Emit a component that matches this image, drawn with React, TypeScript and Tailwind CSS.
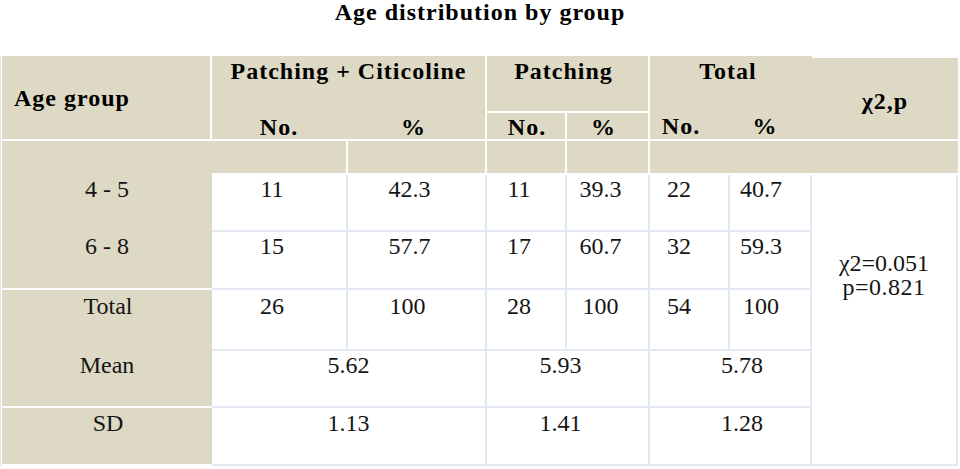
import React from "react";

const BEIGE = "bg-[#ddd9c4]";

export default function App() {
  const serif = { fontFamily: '"Liberation Serif", "Times New Roman", serif' };
  const hdr = `${BEIGE} font-bold text-[24px] leading-[28px] tracking-[1px] text-black`;
  const dat = "bg-white text-[24px] leading-[28px] text-[#151515] border-[#e3e9f0] flex justify-center";
  const age = `${BEIGE} text-[24px] leading-[28px] text-[#151515] flex justify-center`;
  return (
    <div className="w-[960px] h-[469px] bg-white overflow-hidden" style={serif}>
      <div className="h-[24px] text-center font-bold text-[24px] leading-[24px] tracking-[1px] text-black">
        Age distribution by group
      </div>
      <div className="mt-[32px] pl-[1px] border-l border-[#e6e6e6] w-[958px]">
        <div className="grid grid-cols-[210px_136px_139px_80px_83px_80px_82px_146px] grid-rows-[57px_28px_34px_57px_58px_61px_57px_58px]">
          {/* Header row 1-2 */}
          <div className={`${hdr} col-start-1 row-start-1 row-span-2 border-r-2 border-b-2 border-white flex items-center pl-[12px]`}>
            Age group
          </div>
          <div className={`${hdr} col-start-2 col-span-2 row-start-1 border-r-2 border-white text-center pt-[1px]`}>
            Patching + Citicoline
          </div>
          <div className={`${hdr} col-start-2 row-start-2 border-b-2 border-white text-center pr-[2px]`}>No.</div>
          <div className={`${hdr} col-start-3 row-start-2 border-b-2 border-r-2 border-white text-center pr-[6px]`}>%</div>
          <div className={`${hdr} col-start-4 col-span-2 row-start-1 border-b-2 border-r-2 border-white text-center pt-[1px] pr-[8px]`}>
            Patching
          </div>
          <div className={`${hdr} col-start-4 row-start-2 border-b-2 border-r-2 border-white text-center pl-[2px]`}>No.</div>
          <div className={`${hdr} col-start-5 row-start-2 border-b-2 border-r-2 border-white text-center pr-[8px]`}>%</div>
          <div className={`${hdr} col-start-6 col-span-2 row-start-1 text-center pt-[1px] pr-[6px]`}>
            Total
          </div>
          <div className={`${hdr} col-start-6 row-start-2 border-b-2 border-white flex flex-col`}>
            <div className="h-[2px] bg-white mr-[3px]" />
            <div className="text-center pr-[18px] leading-[26px]">No.</div>
          </div>
          <div className={`${hdr} col-start-7 row-start-2 border-b-2 border-white flex flex-col`}>
            <div className="h-[2px] bg-white ml-[2px]" />
            <div className="text-center pr-[12px] leading-[26px]">%</div>
          </div>
          <div className={`${hdr} col-start-8 row-start-1 row-span-2 border-t-2 border-b-2 border-white flex items-center justify-center pt-[4px]`}>
            χ2,p
          </div>

          {/* Row 3 blank */}
          <div className={`${BEIGE} col-start-1 row-start-3`} />
          <div className={`${BEIGE} col-start-2 row-start-3 border-r-2 border-b-2 border-white`} />
          <div className={`${BEIGE} col-start-3 row-start-3 border-r-2 border-b-2 border-white`} />
          <div className={`${BEIGE} col-start-4 row-start-3 border-r-2 border-b-2 border-white`} />
          <div className={`${BEIGE} col-start-5 row-start-3 border-r-2 border-b-2 border-white`} />
          <div className={`${BEIGE} col-start-6 col-span-3 row-start-3 border-b-2 border-white`} />

          {/* Row 4 */}
          <div className={`${age} col-start-1 row-start-4`}>4 - 5</div>
          <div className={`${dat} col-start-2 row-start-4 border-r-2 border-b-2 pr-[14px]`}>11</div>
          <div className={`${dat} col-start-3 row-start-4 border-r-2 border-b-2 pr-[14px]`}>42.3</div>
          <div className={`${dat} col-start-4 row-start-4 border-r-2 border-b-2 pr-[14px]`}>11</div>
          <div className={`${dat} col-start-5 row-start-4 border-r-2 border-b-2 pr-[14px]`}>39.3</div>
          <div className={`${dat} col-start-6 row-start-4 border-r-2 border-b-2 pr-[20px]`}>22</div>
          <div className={`${dat} col-start-7 row-start-4 border-r-2 border-b-2 pr-[18px]`}>40.7</div>
          <div className="bg-white text-[24px] text-[#151515] border-[#e3e9f0] col-start-8 row-start-4 row-span-5 border-r-2 border-b-2 flex flex-col items-center justify-start pt-[76px] leading-[24px]">
            <div>χ2=0.051</div>
            <div className="tracking-[0.5px]">p=0.821</div>
          </div>

          {/* Row 5 */}
          <div className={`${age} col-start-1 row-start-5 border-b-2 border-white`}>6 - 8</div>
          <div className={`${dat} col-start-2 row-start-5 border-r-2 border-b-2 pr-[14px]`}>15</div>
          <div className={`${dat} col-start-3 row-start-5 border-r-2 border-b-2 pr-[14px]`}>57.7</div>
          <div className={`${dat} col-start-4 row-start-5 border-r-2 border-b-2 pr-[14px]`}>17</div>
          <div className={`${dat} col-start-5 row-start-5 border-r-2 border-b-2 pr-[14px]`}>60.7</div>
          <div className={`${dat} col-start-6 row-start-5 border-r-2 border-b-2 pr-[20px]`}>32</div>
          <div className={`${dat} col-start-7 row-start-5 border-r-2 border-b-2 pr-[18px]`}>59.3</div>

          {/* Row 6 Total */}
          <div className={`${age} col-start-1 row-start-6 pt-[2px] pl-[2px]`}>Total</div>
          <div className={`${dat} col-start-2 row-start-6 border-r-2 border-b-2 pr-[14px] pt-[2px]`}>26</div>
          <div className={`${dat} col-start-3 row-start-6 border-r-2 border-b-2 pr-[18px] pt-[2px]`}>100</div>
          <div className={`${dat} col-start-4 row-start-6 border-r-2 border-b-2 pr-[14px] pt-[2px]`}>28</div>
          <div className={`${dat} col-start-5 row-start-6 border-r-2 border-b-2 pr-[14px] pt-[2px]`}>100</div>
          <div className={`${dat} col-start-6 row-start-6 border-r-2 border-b-2 pr-[20px] pt-[2px]`}>54</div>
          <div className={`${dat} col-start-7 row-start-6 border-r-2 border-b-2 pr-[18px] pt-[2px]`}>100</div>

          {/* Row 7 Mean */}
          <div className={`${age} col-start-1 row-start-7 border-b-2 border-white`}>Mean</div>
          <div className={`${dat} col-start-2 col-span-2 row-start-7 border-r-2 border-b-2`}>5.62</div>
          <div className={`${dat} col-start-4 col-span-2 row-start-7 border-r-2 border-b-2 pr-[14px]`}>5.93</div>
          <div className={`${dat} col-start-6 col-span-2 row-start-7 border-r-2 border-b-2 pl-[24px]`}>5.78</div>

          {/* Row 8 SD */}
          <div className={`${age} col-start-1 row-start-8 border-b-2 border-white pt-[1px] pl-[2px]`}>SD</div>
          <div className={`${dat} col-start-2 col-span-2 row-start-8 border-r-2 border-b-2 pt-[1px]`}>1.13</div>
          <div className={`${dat} col-start-4 col-span-2 row-start-8 border-r-2 border-b-2 pr-[14px] pt-[1px]`}>1.41</div>
          <div className={`${dat} col-start-6 col-span-2 row-start-8 border-r-2 border-b-2 pl-[24px] pt-[1px]`}>1.28</div>
        </div>
      </div>
    </div>
  );
}
